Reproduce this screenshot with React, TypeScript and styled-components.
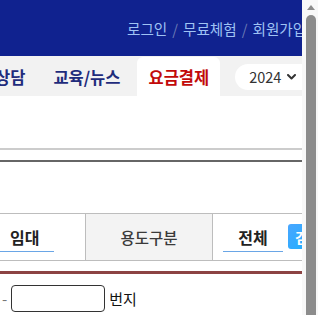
import React from 'react';
import styled, { createGlobalStyle } from 'styled-components';

const GlobalStyle = createGlobalStyle`
  html, body {
    margin: 0;
    padding: 0;
    overflow: hidden;
    background: #ffffff;
  }
  body {
    font-family: "Noto Sans CJK KR", "Noto Sans", sans-serif;
  }
`;

const Frame = styled.div`
  display: flex;
  width: 318px;
  height: 315px;
  overflow: hidden;
`;

const Viewport = styled.div`
  flex: 1;
  min-width: 0;
  overflow: hidden;
  background: #ffffff;
`;

const ScrollTrack = styled.div`
  width: 16px;
  flex: none;
  background: #f8f8f8;
  display: flex;
  flex-direction: column;
  align-items: center;
  padding-left: 1px;
  box-sizing: border-box;
`;

const ScrollArrow = styled.div`
  margin-top: 5px;
  width: 0;
  height: 0;
  border-left: 4px solid transparent;
  border-right: 4px solid transparent;
  border-bottom: 5px solid #8c8c8c;
`;

const ScrollThumb = styled.div`
  flex: 1;
  width: 10px;
  margin-top: 5px;
  background: #8c8c8c;
  border-radius: 5px 5px 0 0;
`;

const Header = styled.header`
  height: 56px;
  background: #10228f;
  box-sizing: border-box;
  padding: 21px 0 0 127px;
  white-space: nowrap;
  font-size: 14.6px;
  line-height: 15px;
`;

const TopLink = styled.a`
  color: #9fc3f4;
  text-decoration: none;
`;

const Slash = styled.span`
  color: #6d7cb6;
  margin: 0 5px;
`;

const Nav = styled.nav`
  height: 40px;
  background: #f2f2f2;
  box-sizing: border-box;
  padding-top: 1px;
  margin-left: -16px;
  display: flex;
  gap: 6px;
  white-space: nowrap;
`;

const NavItem = styled.a<{ $active?: boolean }>`
  display: flex;
  align-items: center;
  padding: 0 11px;
  font-size: 16.5px;
  font-weight: 700;
  text-decoration: none;
  color: ${p => (p.$active ? '#c20a0a' : '#1f2c7c')};
  background: ${p => (p.$active ? '#ffffff' : 'transparent')};
  border-radius: 6px 6px 0 0;
`;

const YearPill = styled.div`
  align-self: center;
  margin-left: 9px;
  height: 26px;
  padding: 0 14px;
  background: #ffffff;
  border-radius: 13px;
  display: flex;
  align-items: center;
  gap: 6px;
  font-size: 14.5px;
  color: #333333;
  flex: none;
  width: 80px;
`;

const Body = styled.div`
  padding-top: 52px;
`;

const Rule = styled.div<{ $color: string; $size: number; $gap: number }>`
  height: ${p => p.$size}px;
  background: ${p => p.$color};
  margin-bottom: ${p => p.$gap}px;
`;

const FilterRow = styled.div`
  display: flex;
  height: 48px;
  box-sizing: border-box;
  border-top: 1px solid #bdbdbd;
  border-bottom: 1px solid #bdbdbd;
  white-space: nowrap;
  margin-bottom: 10px;
`;

const Cell = styled.div<{ $width: number; $label?: boolean }>`
  width: ${p => p.$width}px;
  flex: none;
  box-sizing: border-box;
  display: flex;
  align-items: ${p => (p.$label ? 'center' : 'flex-start')};
  justify-content: ${p => (p.$label ? 'center' : 'flex-start')};
  padding-top: ${p => (p.$label ? 0 : 8)}px;
  background: ${p => (p.$label ? '#f3f3f3' : 'transparent')};
  border-left: ${p => (p.$label ? '1px solid #bdbdbd' : 'none')};
  border-right: ${p => (p.$label ? '1px solid #bdbdbd' : 'none')};
  font-size: 15.5px;
  font-weight: 500;
  color: #3a3a3a;
`;

const Field = styled.div<{ $width: number; $center?: boolean; $inset?: number }>`
  width: ${p => p.$width}px;
  height: 30px;
  margin-left: ${p => p.$inset ?? 0}px;
  box-sizing: border-box;
  border-bottom: 1px solid #6aa6e6;
  display: flex;
  align-items: center;
  justify-content: ${p => (p.$center ? 'center' : 'flex-start')};
  padding-left: ${p => (p.$center ? 0 : 10)}px;
  font-size: 16px;
  font-weight: 700;
  color: #222222;
`;

const SearchButton = styled.button`
  margin: 2px 0 0 5px;
  width: 40px;
  height: 25px;
  border: none;
  border-radius: 3px;
  background: linear-gradient(135deg, #4aa6ff, #0fb3ff);
  color: #ffffff;
  font-family: inherit;
  font-size: 14px;
  font-weight: 700;
  padding: 0;
  flex: none;
`;

const AddressRow = styled.div`
  display: flex;
  align-items: center;
  padding: 11px 0 0 2px;
  font-size: 15px;
  white-space: nowrap;
`;

const Dash = styled.span`
  color: #777777;
`;

const LotInput = styled.input`
  margin: 0 4px 0 4px;
  width: 94px;
  height: 27px;
  box-sizing: border-box;
  border: 1px solid #333333;
  border-radius: 4px;
  padding: 0 4px;
  font-family: inherit;
`;

const Unit = styled.span`
  color: #111111;
`;

const Chevron = () => (
  <svg width="9" height="6" viewBox="0 0 9 6" fill="none">
    <path d="M1 1l3.5 3.5L8 1" stroke="#333" strokeWidth="2" strokeLinecap="round" strokeLinejoin="round" />
  </svg>
);

export default function App() {
  return (
    <>
      <GlobalStyle />
      <Frame>
        <Viewport>
          <Header>
            <TopLink href="#">로그인</TopLink>
            <Slash>/</Slash>
            <TopLink href="#">무료체험</TopLink>
            <Slash>/</Slash>
            <TopLink href="#">회원가입</TopLink>
          </Header>
          <Nav>
            <NavItem href="#">상담</NavItem>
            <NavItem href="#">교육/뉴스</NavItem>
            <NavItem href="#" $active>요금결제</NavItem>
            <YearPill>
              2024 <Chevron />
            </YearPill>
          </Nav>
          <Body>
            <Rule $color="#cccccc" $size={2} $gap={10} />
            <Rule $color="#666666" $size={2} $gap={51} />
            <FilterRow>
              <Cell $width={85}>
                <Field $width={54}>임대</Field>
              </Cell>
              <Cell $width={128} $label>용도구분</Cell>
              <Cell $width={140}>
                <Field $width={60} $center $inset={10}>전체</Field>
                <SearchButton>검색</SearchButton>
              </Cell>
            </FilterRow>
            <Rule $color="#8c4343" $size={3} $gap={0} />
            <AddressRow>
              <Dash>-</Dash>
              <LotInput />
              <Unit>번지</Unit>
            </AddressRow>
          </Body>
        </Viewport>
        <ScrollTrack>
          <ScrollArrow />
          <ScrollThumb />
        </ScrollTrack>
      </Frame>
    </>
  );
}
